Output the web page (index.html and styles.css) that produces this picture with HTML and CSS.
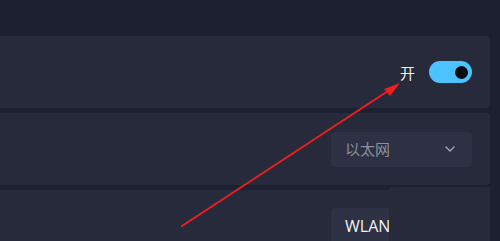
FILE: index.html
```html
<!DOCTYPE html>
<html lang="zh-CN">
  <head>
    <meta charset="UTF-8" />
    <meta name="viewport" content="width=device-width, initial-scale=1.0" />
    <title>网络设置</title>
    <link rel="stylesheet" href="styles.css">
  </head>

  <body>
    <div class="liste">
      <!-- Rad med bryter -->
      <div class="kort">
        <span class="status">开</span>
        <div class="bryter"><span class="knapp"></span></div>
      </div>

      <!-- Rad med nedtrekksmeny -->
      <div class="kort">
        <div class="meny">
          <span class="meny-tekst">以太网</span>
          <svg class="pil-ned" width="10" height="6" viewBox="0 0 10 6">
            <path d="M1 1 L5 5 L9 1" fill="none" stroke="#a9acb8" stroke-width="1.3" stroke-linecap="round" stroke-linejoin="round" />
          </svg>
        </div>
      </div>

      <div class="kort kort-nederst">
        <div class="meny meny-wlan">
          <span class="meny-tekst lys">WLAN</span>
        </div>
      </div>
    </div>

    <!-- Lys flekk over nederste hjorne -->
    <div class="flekk"></div>

    <!-- Rod pil -->
    <svg class="rod-pil" width="500" height="241" viewBox="0 0 500 241">
      <line x1="182" y1="226" x2="388" y2="91" stroke="#ee1f1f" stroke-width="2" stroke-linecap="round" />
      <polygon points="400,83 384,89 390,96" fill="#ee1f1f" />
    </svg>
  </body>
</html>
```

FILE: styles.css
```css
html,
body {
  height: 241px;
  overflow: hidden;
}

body {
  margin: 0;
  background-color: #1d2030;
  font-family: "Noto Sans CJK SC", "Noto Sans", sans-serif;
}

.liste {
  display: flex;
  flex-direction: column;
  gap: 5px;
  padding-top: 36px;
  padding-right: 10px;
}

.kort {
  height: 72px;
  background-color: #272a3b;
  border-radius: 0 4px 4px 0;
  display: flex;
  align-items: center;
  justify-content: flex-end;
  padding-right: 18px;
}

.kort-nederst {
  align-items: flex-start;
  padding-top: 18px;
  height: 33px;
  border-radius: 0 4px 0 0;
}

.status {
  color: #f1f1f4;
  font-size: 15px;
  margin-right: 14px;
  line-height: 1;
}

.bryter {
  width: 43px;
  height: 22px;
  border-radius: 11px;
  background-color: #4cc2ff;
  display: flex;
  align-items: center;
  justify-content: flex-end;
  padding-right: 4px;
  box-sizing: border-box;
}

.knapp {
  width: 13px;
  height: 13px;
  border-radius: 50%;
  background-color: #0b0b10;
}

.meny {
  width: 141px;
  height: 35px;
  background-color: #2d3143;
  border-radius: 4px;
  display: flex;
  align-items: center;
  justify-content: space-between;
  padding: 0 17px 0 14px;
  box-sizing: border-box;
}

.meny-wlan {
  height: 33px;
  border-radius: 4px 4px 0 0;
  align-items: flex-end;
  padding-bottom: 5px;
}

.meny-tekst {
  color: #8c8f9b;
  font-size: 15px;
  line-height: 1.2;
}

.lys {
  color: #f3f3f6;
  font-size: 16px;
  font-family: "Open Sans", "Noto Sans", sans-serif;
}

.flekk {
  position: absolute;
  left: 389px;
  top: 187px;
  width: 101px;
  height: 54px;
  background-color: #272a3b;
  border-radius: 4px 0 0 0;
}

.rod-pil {
  position: absolute;
  left: 0;
  top: 0;
}
```
